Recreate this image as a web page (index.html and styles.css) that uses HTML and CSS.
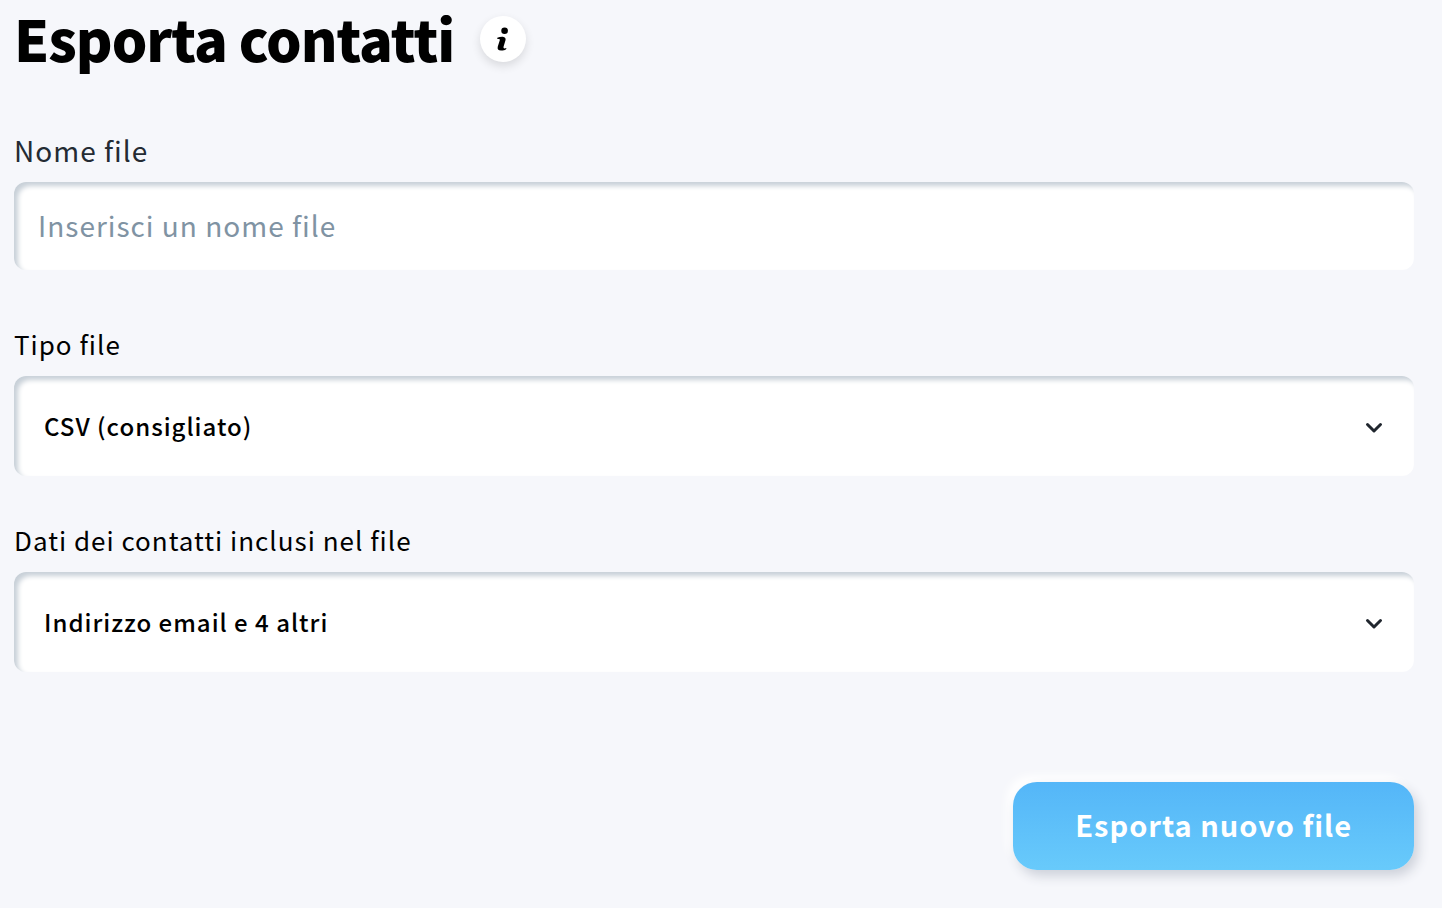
FILE: index.html
```html
<!DOCTYPE html>
<html lang="it">

<head>
    <meta charset="UTF-8">
    <meta name="viewport" content="width=device-width, initial-scale=1.0">
    <title>Esporta contatti</title>
    <link rel="stylesheet" href="styles.css">
</head>

<body>
    <form class="export-form">
        <div class="header">
            <h1 class="title">Esporta contatti</h1>
            <button type="button" class="info-btn" aria-label="Informazioni">
                <svg class="info-icon" viewBox="0 0 14 26" aria-hidden="true">
                    <circle cx="8.6" cy="4.8" r="3.3" />
                    <path d="M1.3 11.8 C3 10.9 5 10.6 6.8 10.7 C9.2 10.9 10 12.4 9.5 14.2 L7.6 20.6 C7.3 21.8 7.6 22.4 8.4 22.4 C9.2 22.4 9.8 22.2 10.3 21.9 C10.4 22.5 10.3 22.9 10 23.2 C8.6 24.3 6.8 24.7 5 24.6 C2.2 24.5 1.1 22.8 1.8 20.4 L3.7 14.6 C4 13.4 3.7 12.9 2.8 12.9 L1.5 13 C1.2 12.6 1.1 12.2 1.3 11.8 Z" />
                </svg>
            </button>
        </div>
        <div class="field field-name">
            <label class="label label-name" for="file-name">Nome file</label>
            <input class="control input" id="file-name" type="text" placeholder="Inserisci un nome file">
        </div>
        <div class="field">
            <label class="label" for="file-type">Tipo file</label>
            <div class="select-box">
                <select class="control select" id="file-type">
                    <option>CSV (consigliato)</option>
                </select>
                <svg class="arrow" viewBox="0 0 18 12" aria-hidden="true">
                    <path d="M2.5 2.5 L9 9 L15.5 2.5" />
                </svg>
            </div>
        </div>
        <div class="field">
            <label class="label" for="file-data">Dati dei contatti inclusi nel file</label>
            <div class="select-box">
                <select class="control select" id="file-data">
                    <option>Indirizzo email e 4 altri</option>
                </select>
                <svg class="arrow" viewBox="0 0 18 12" aria-hidden="true">
                    <path d="M2.5 2.5 L9 9 L15.5 2.5" />
                </svg>
            </div>
        </div>
        <div class="footer">
            <button type="submit" class="submit-btn">Esporta nuovo file</button>
        </div>
    </form>
</body>

</html>
```

FILE: styles.css
```css
* {
    margin: 0;
    padding: 0;
    box-sizing: border-box;
}

body {
    background-color: #f6f7fb;
    color: #000;
    font-family: "Noto Sans CJK SC", "Open Sans", sans-serif;
}

.export-form {
    padding: 0 28px 38px 14px;
}

.header {
    display: flex;
    align-items: flex-start;
    gap: 26px;
    margin-bottom: 50px;
}

.title {
    font-size: 56px;
    font-weight: 900;
    line-height: 76px;
    letter-spacing: -1px;
}

.info-btn {
    display: flex;
    align-items: center;
    justify-content: center;
    width: 46px;
    height: 46px;
    margin-top: 16px;
    border: none;
    border-radius: 50%;
    background-color: #fff;
    box-shadow: 0 4px 10px rgba(0, 0, 0, 0.12);
}

.info-icon {
    width: 14px;
    height: 26px;
}

.field {
    display: flex;
    flex-direction: column;
    gap: 8px;
    margin-bottom: 40px;
}

.field-name {
    margin-bottom: 50px;
}

.label {
    font-size: 26px;
    line-height: 48px;
    letter-spacing: 1px;
}

.label-name {
    color: #242b33;
    font-size: 28px;
}

.control {
    width: 100%;
    border: none;
    border-radius: 12px;
    background-color: #fff;
    box-shadow: inset 4px 4px 5px #c8d0d8;
    font-family: inherit;
    letter-spacing: 1px;
}

.input {
    height: 88px;
    padding: 0 24px 2px;
    font-size: 28px;
}

.input::placeholder {
    color: #8093a3;
    opacity: 1;
}

.select-box {
    display: grid;
    align-items: center;
}

/* the arrow lies over the right end of the select */
.select-box > * {
    grid-area: 1 / 1;
}

.select {
    height: 100px;
    padding: 0 70px 2px 30px;
    appearance: none;
    color: #000;
    font-size: 24px;
    font-weight: 500;
}

.arrow {
    justify-self: end;
    width: 18px;
    height: 12px;
    margin: 4px 31px 0 0;
    fill: none;
    stroke: #20262e;
    stroke-width: 3;
    stroke-linecap: round;
    stroke-linejoin: round;
    pointer-events: none;
}

.footer {
    display: flex;
    justify-content: flex-end;
    padding-top: 70px;
}

.submit-btn {
    height: 88px;
    padding: 0 62px 4px;
    border: none;
    border-radius: 24px;
    background: linear-gradient(#54b6f8, #68cafb);
    box-shadow: 4px 6px 12px #cdd1da, -6px -6px 10px #fff;
    color: #fff;
    font-family: inherit;
    font-size: 29px;
    font-weight: 700;
    letter-spacing: 1px;
}
```
